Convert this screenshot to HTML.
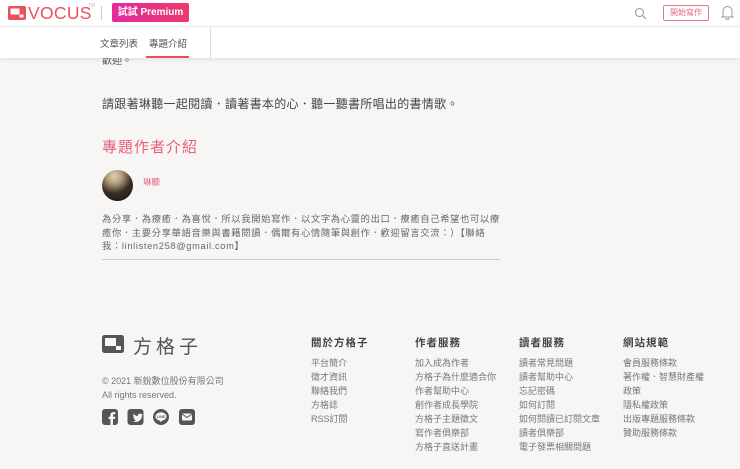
<!DOCTYPE html>
<html><head><meta charset="utf-8"><style>
*{margin:0;padding:0;box-sizing:border-box}
body{width:740px;height:469px;overflow:hidden;background:#f7f6f4;font-family:"Liberation Sans","Noto Sans CJK TC",sans-serif;color:#444;position:relative}
.a{position:absolute;white-space:nowrap}
.hdr{position:absolute;left:0;top:0;width:740px;height:27px;background:#fff;border-bottom:1px solid #eee}
.tab{position:absolute;left:0;top:27px;width:740px;height:31px;background:#fff;box-shadow:0 2px 4px rgba(0,0,0,.08)}
.col{position:absolute;top:336px;font-size:9px;color:#777;line-height:14px}
.col b{display:block;font-size:10.5px;color:#444;margin-bottom:6px;letter-spacing:1px}
</style></head><body>
<div class="a" style="left:102px;top:52px;font-size:10px;color:#555">歡迎。</div>
<div class="hdr">
 <svg class="a" style="left:8px;top:6px" width="18" height="14" viewBox="0 0 18 14"><rect width="18" height="14" rx="2" fill="#e8505b"/><rect x="2.5" y="2.5" width="9" height="6" fill="#fff"/><rect x="11.5" y="8.5" width="4" height="3" fill="#fff"/></svg>
 <div class="a" style="left:28px;top:3px;font-size:17.5px;color:#e8505b;letter-spacing:0.3px">VOCUS</div>
 <div class="a" style="left:88px;top:3px;font-size:5px;color:#bbb">TM</div>
 <div class="a" style="left:101px;top:6px;width:1px;height:14px;background:#ccc"></div>
 <div class="a" style="left:112px;top:3px;width:77px;height:19px;background:linear-gradient(90deg,#e6299c,#ec3a6c);border-radius:2px;color:#fff;font-size:10px;font-weight:bold;line-height:19px;text-align:center">試試 Premium</div>
 <svg class="a" style="left:634px;top:7px" width="13" height="13" viewBox="0 0 13 13"><circle cx="5.5" cy="5.5" r="4" fill="none" stroke="#999" stroke-width="1.1"/><path d="M8.5 8.5L12 12" stroke="#999" stroke-width="1.1"/></svg>
 <div class="a" style="left:663px;top:5px;width:46px;height:16px;border:1px solid #e07a8a;border-radius:2px;color:#e06a7e;font-size:8px;line-height:14px;text-align:center">開始寫作</div>
 <svg class="a" style="left:721px;top:5px" width="13" height="15" viewBox="0 0 13 15"><path d="M2 11V6a4.5 4.5 0 0 1 9 0v5l1 1H1z M5 13a1.5 1.5 0 0 0 3 0" fill="none" stroke="#999" stroke-width="1"/></svg>
</div>
<div class="tab">
 <div class="a" style="left:100px;top:9px;font-size:9.5px;color:#555">文章列表</div>
 <div class="a" style="left:149px;top:9px;font-size:9.5px;color:#555">專題介紹</div>
 <div class="a" style="left:146px;top:29px;width:43px;height:2px;background:#e8505b"></div>
 <div class="a" style="left:210px;top:0;width:1px;height:31px;background:#ddd"></div>
</div>
<div class="a" style="left:102px;top:95px;font-size:12px;color:#444;letter-spacing:0.3px">請跟著琳聽一起閱讀．讀著書本的心．聽一聽書所唱出的書情歌。</div>
<div class="a" style="left:102px;top:136px;font-size:15px;color:#e8607a;letter-spacing:1px">專題作者介紹</div>
<div class="a" style="left:102px;top:170px;width:31px;height:31px;border-radius:50%;background:radial-gradient(circle at 40% 20%,#e2d3b6 0,#b09a7a 25%,#3a2e24 55%,#120e0b 100%)"></div>
<div class="a" style="left:143px;top:176px;font-size:8.5px;color:#e8607a">琳聽</div>
<div class="a" style="left:102px;top:213px;font-size:9.3px;color:#666;line-height:13.6px;white-space:normal;width:400px;letter-spacing:0.65px">為分享．為療癒．為喜悅．所以我開始寫作．以文字為心靈的出口．療癒自己希望也可以療癒你．主要分享華語音樂與書籍閱讀．偶爾有心情隨筆與創作．歡迎留言交流：）【聯絡我：linlisten258@gmail.com】</div>
<div class="a" style="left:102px;top:259px;width:398px;height:1px;background:#ccc"></div>
<svg class="a" style="left:102px;top:335px" width="22" height="18" viewBox="0 0 22 18"><rect width="22" height="18" rx="2.5" fill="#555"/><rect x="3" y="3" width="11" height="8" fill="#f7f6f4"/><rect x="14" y="11" width="5" height="4" fill="#f7f6f4"/></svg>
<div class="a" style="left:133px;top:332px;font-size:19px;color:#555;letter-spacing:4px">方格子</div>
<div class="a" style="left:102px;top:374px;font-size:9px;color:#777;line-height:14px">© 2021 新銳數位股份有限公司<br>All rights reserved.</div>
<svg class="a" style="left:102px;top:409px" width="110" height="17" viewBox="0 0 110 17">
<rect x="0" y="0" width="16" height="16" rx="3" fill="#555"/><path d="M11 16V10h2l.4-2.3H11V6.3c0-.7.3-1.1 1.1-1.1h1.3V3.2c-.4 0-1.2-.1-2-.1-2 0-3 1.1-3 3v1.6H6.6V10h1.8v6z" fill="#f7f6f4"/>
<rect x="25.5" y="0" width="16" height="16" rx="3" fill="#555"/><path d="M29 11.5c1.5.9 3.6.9 5-.3-1 0-1.8-.6-2-1.4.4 0 .7 0 .9-.1-1.1-.3-1.8-1.2-1.8-2.2.3.2.6.3 1 .3-.9-.7-1.2-1.9-.6-2.9 1.1 1.3 2.6 2.1 4.3 2.2-.3-1.3.7-2.5 2-2.5.6 0 1.1.2 1.5.6.5-.1.9-.3 1.3-.5-.2.5-.5.9-.9 1.1.4 0 .8-.1 1.2-.3-.3.4-.6.8-1 1.1.1 3.3-2.6 6.4-6 6.4-1.3 0-2.4-.4-3.4-1z" fill="#f7f6f4"/>
<rect x="51" y="0" width="16" height="16" rx="8" fill="#555"/><ellipse cx="59" cy="7.5" rx="5.5" ry="4.3" fill="#f7f6f4"/><path d="M58 11l.5 2.5 2-2.5z" fill="#f7f6f4"/><text x="59" y="9" font-size="3.6" text-anchor="middle" fill="#555" font-family="Liberation Sans" font-weight="bold">LINE</text>
<rect x="77" y="0" width="16" height="16" rx="3" fill="#555"/><rect x="80" y="4.5" width="10" height="7" rx="1" fill="#f7f6f4"/><path d="M80 5l5 3.5 5-3.5" fill="none" stroke="#555" stroke-width="1"/>
</svg>
<div class="col" style="left:311px"><b>關於方格子</b>平台簡介<br>徵才資訊<br>聯絡我們<br>方格誌<br>RSS訂閱</div>
<div class="col" style="left:415px"><b>作者服務</b>加入成為作者<br>方格子為什麼適合你<br>作者幫助中心<br>創作者成長學院<br>方格子主題徵文<br>寫作者俱樂部<br>方格子直送計畫</div>
<div class="col" style="left:519px"><b>讀者服務</b>讀者常見問題<br>讀者幫助中心<br>忘記密碼<br>如何訂閱<br>如何閱讀已訂閱文章<br>讀者俱樂部<br>電子發票相關問題</div>
<div class="col" style="left:623px"><b>網站規範</b>會員服務條款<br>著作權．智慧財產權<br>政策<br>隱私權政策<br>出版專題服務條款<br>贊助服務條款</div>
</body></html>
